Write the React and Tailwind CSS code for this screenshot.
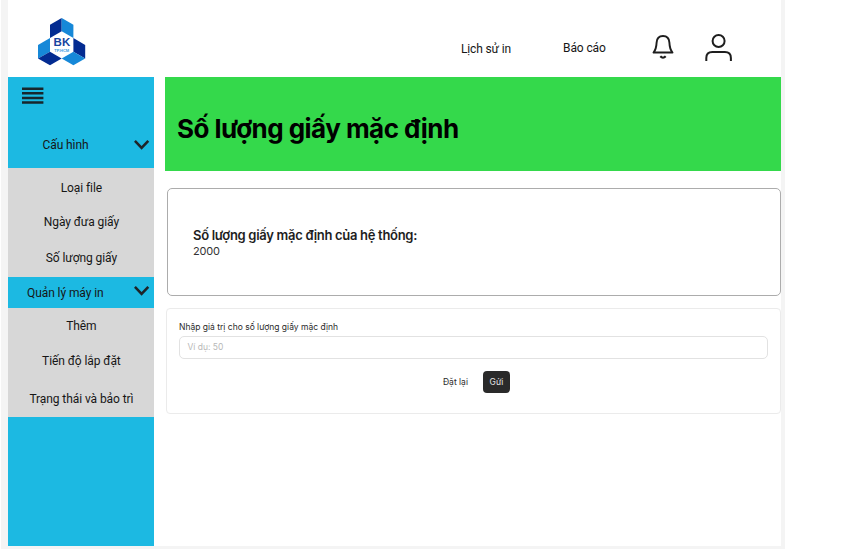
function Logo() {
  return (
    <svg width="48" height="48" viewBox="0 0 48 48" aria-hidden="true">
      <path d="M23.7 0 L12 6.7 V20 L23.7 13.3 Z" fill="#032b91" />
      <path d="M23.7 0 L35.4 6.7 V20 L23.7 13.3 Z" fill="#1688d8" />
      <path d="M12 20 L0 27 V40.5 L12 33.8 Z" fill="#1688d8" />
      <path d="M12 33.8 L23.7 40.5 L12 47.2 L0 40.5 Z" fill="#032b91" />
      <path d="M35.4 20 L47.2 27 V40.5 L35.4 33.8 Z" fill="#032b91" />
      <path d="M35.4 33.8 L47.2 40.5 L35.4 47.2 L23.7 40.5 Z" fill="#1688d8" />
      <text x="23.9" y="28.4" textAnchor="middle" fontFamily="Liberation Sans, sans-serif" fontWeight="700" fontSize="11.5" fill="#17439f">BK</text>
      <text x="23.7" y="34.4" textAnchor="middle" fontFamily="Liberation Sans, sans-serif" fontWeight="700" fontSize="4" fill="#3a9be0">TP.HCM</text>
    </svg>
  );
}

function Chevron() {
  return (
    <svg width="16" height="10" viewBox="0 0 16 10" fill="none" stroke="#1e2428" strokeWidth="2.6" aria-hidden="true">
      <path d="M0.9 0.9 L7.6 7.8 L14.3 0.9" />
    </svg>
  );
}

function Bell() {
  return (
    <svg width="22" height="26" viewBox="0 0 22 26" fill="none" stroke="#1e1e1e" strokeWidth="1.9" strokeLinejoin="round" aria-hidden="true">
      <path d="M1.5 18.5 H20.5 C18.2 15.8 17.6 13.2 17.4 8.6 C17.2 4.4 14.8 2 11 2 C7.2 2 4.8 4.4 4.6 8.6 C4.4 13.2 3.8 15.8 1.5 18.5 Z" />
      <path d="M8.3 22.3 Q11 25.2 13.7 22.3" strokeWidth="2.1" />
    </svg>
  );
}

function User() {
  return (
    <svg width="28" height="28" viewBox="0 0 28 28" fill="none" stroke="#1e1e1e" strokeWidth="2" aria-hidden="true">
      <circle cx="13.6" cy="7" r="6" />
      <path d="M1.3 27 V24 Q1.3 18 7.3 18 H19.9 Q25.9 18 25.9 24 V27" />
    </svg>
  );
}

function Menu() {
  return (
    <svg width="22" height="18" viewBox="0 0 22 18" stroke="#17262c" strokeWidth="2.5" aria-hidden="true">
      <path d="M0 1.7 H21.4 M0 6.3 H21.4 M0 11 H21.4 M0 15.6 H21.4" />
    </svg>
  );
}

function SubItem({ label, className }) {
  return <a className={"flex items-center justify-center whitespace-nowrap " + className}>{label}</a>;
}

export default function App() {
  return (
    <div className="h-[551px] w-[842px] overflow-hidden bg-white pl-px font-['Roboto',sans-serif] text-[12px] text-[#161616]">
      <div className="h-[549px] w-[784px] bg-[#f4f4f4] pr-[4px] pl-[7px]">
        <div className="flex h-[546px] flex-col bg-white">
          <header className="flex h-[77px] shrink-0 items-start">
            <div className="ml-[30px] pt-[18px]"><Logo /></div>
            <a className="ml-[375px] w-[102px] pt-[41px] leading-4 tracking-[-0.15px] whitespace-nowrap">Lịch sử in</a>
            <a className="pt-[40px] leading-4 tracking-[-0.1px] whitespace-nowrap">Báo cáo</a>
            <div className="ml-auto pt-[34px]"><Bell /></div>
            <div className="mr-[48px] ml-[31px] pt-[34px]"><User /></div>
          </header>
          <div className="flex flex-1">
            <nav className="ml-[0.4px] flex w-[146px] flex-col bg-[#1cb9e2] tracking-[-0.08px]">
              <div className="h-[91px] pl-[13.6px]">
                <div className="flex h-[27px] items-start pt-[10px]"><Menu /></div>
                <div className="mt-[31px] flex h-[20px] items-center justify-between pr-[4.4px] pl-[20.5px]">
                  <span>Cấu hình</span>
                  <Chevron />
                </div>
              </div>
              <div className="h-[109px] bg-[#d7d7d7]">
                <SubItem label="Loại file" className="h-[39px]" />
                <SubItem label="Ngày đưa giấy" className="h-[30px]" />
                <SubItem label="Số lượng giấy" className="h-[42px]" />
              </div>
              <div className="flex h-[31px] items-center justify-between pr-[4.4px] pl-[18.6px]">
                <span>Quản lý máy in</span>
                <div className="pb-[3px]"><Chevron /></div>
              </div>
              <div className="h-[109px] bg-[#d7d7d7]">
                <SubItem label="Thêm" className="h-[35px]" />
                <SubItem label="Tiến độ lắp đặt" className="h-[36px]" />
                <SubItem label="Trạng thái và bảo trì" className="h-[40px]" />
              </div>
            </nav>
            <main className="ml-[10.6px] flex-1 font-['Inter',sans-serif]">
              <h1 className="flex h-[94px] items-center bg-[#34d94b] pt-[8px] pl-[12px] text-[26px] font-bold tracking-[-0.54px] whitespace-nowrap text-black">Số lượng giấy mặc định</h1>
              <section className="mt-[17px] ml-[2px] h-[108px] rounded-[5px] border border-[#acacac] pt-[37px] pl-[25px] text-[#1e1e1e]">
                <h2 className="text-[13px] leading-[18px] font-semibold tracking-[-0.3px]">Số lượng giấy mặc định của hệ thống:</h2>
                <p className="text-[11px] leading-[14px] tracking-[-0.15px] text-[#333]">2000</p>
              </section>
              <form className="mt-[12px] ml-px h-[106px] rounded-[4px] border border-[#ebebeb] px-[12px] pt-[12px] text-[8.5px] text-[#2a2a2a]">
                <label className="block leading-[12px]">Nhập giá trị cho số lượng giấy mặc định</label>
                <div className="mt-[3px] flex h-[23px] items-center rounded-[5px] border border-[#e2e2e2] pl-[7.5px] text-[#b8b8b8]">Ví dụ: 50</div>
                <div className="mt-[12px] flex h-[22px] items-center pl-[264px]">
                  <button type="button">Đặt lại</button>
                  <button type="button" className="ml-[15px] h-[22px] w-[27px] rounded-[4px] bg-[#2a2a2a] text-[#e8e8e8]">Gửi</button>
                </div>
              </form>
            </main>
          </div>
        </div>
      </div>
    </div>
  );
}
